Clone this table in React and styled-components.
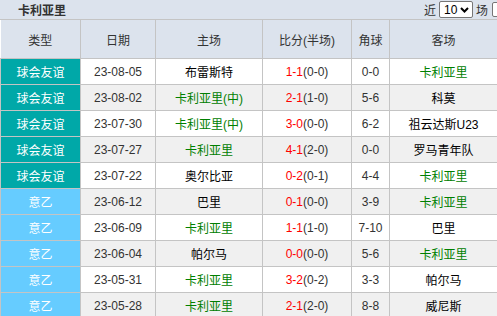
import React from "react";
import styled, { createGlobalStyle } from "styled-components";

const GlobalStyle = createGlobalStyle`
  html, body {
    margin: 0;
    padding: 0;
    background: #ffffff;
  }
  body {
    font-family: "Liberation Sans", "Noto Sans CJK SC", sans-serif;
    font-size: 12px;
    color: #333333;
  }
`;

const Wrapper = styled.div`
  width: 497px;
  height: 316px;
  overflow: hidden;
`;

const TitleBar = styled.div`
  height: 19px;
  background: #dce3ed;
  border-bottom: 1px solid #c4c4c4;
  display: flex;
  align-items: center;
  justify-content: space-between;
  padding-left: 18px;
`;

const Title = styled.div`
  font-size: 12px;
  font-weight: bold;
  color: #333333;
`;

const Recent = styled.div`
  display: flex;
  align-items: center;
  gap: 3px;
  color: #333333;
  margin-right: -9px;
`;

const FakeSelect = styled.div`
  width: 34px;
  height: 17px;
  border: 1px solid #767676;
  border-radius: 2px;
  background: #ffffff;
  display: flex;
  align-items: center;
  justify-content: space-between;
  padding: 0 3px 0 4px;
  box-sizing: border-box;
  font-size: 12px;
  color: #000000;
`;

const Check = styled.div`
  width: 12px;
  height: 13px;
  border: 1px solid #767676;
  border-radius: 2px;
  background: #ffffff;
  margin-left: 1px;
`;

const Table = styled.table`
  border-collapse: collapse;
  table-layout: fixed;
  width: 498px;
`;

const HeadCell = styled.th`
  height: 38px;
  padding: 0;
  background: #dce3ed;
  font-weight: normal;
  color: #333333;
  text-align: center;
  border: 1px solid #c4c4c4;
  border-top: none;
`;

const Row = styled.tr`
  background: ${(p) => (p.$alt ? "#f0f0f0" : "#ffffff")};
`;

const Cell = styled.td`
  height: 25px;
  padding: 0;
  text-align: center;
  border: 1px solid #c4c4c4;
  white-space: nowrap;
  color: #333333;
`;

const TypeCell = styled(Cell)`
  background: ${(p) => (p.$league ? "#66ccff" : "#00a8a8")};
  color: #ffffff;
`;

const TeamCell = styled(Cell)`
  color: ${(p) => (p.$green ? "#008000" : "#000000")};
`;

const Red = styled.span`
  color: #ff0000;
`;

const rows = [
  ["球会友谊", "23-08-05", "布雷斯特", false, "1-1", "(0-0)", "0-0", "卡利亚里", true],
  ["球会友谊", "23-08-02", "卡利亚里(中)", true, "2-1", "(1-0)", "5-6", "科莫", false],
  ["球会友谊", "23-07-30", "卡利亚里(中)", true, "3-0", "(0-0)", "6-2", "祖云达斯U23", false],
  ["球会友谊", "23-07-27", "卡利亚里", true, "4-1", "(2-0)", "0-0", "罗马青年队", false],
  ["球会友谊", "23-07-22", "奥尔比亚", false, "0-2", "(0-1)", "4-4", "卡利亚里", true],
  ["意乙", "23-06-12", "巴里", false, "0-1", "(0-0)", "3-9", "卡利亚里", true],
  ["意乙", "23-06-09", "卡利亚里", true, "1-1", "(1-0)", "7-10", "巴里", false],
  ["意乙", "23-06-04", "帕尔马", false, "0-0", "(0-0)", "5-6", "卡利亚里", true],
  ["意乙", "23-05-31", "卡利亚里", true, "3-2", "(0-2)", "3-3", "帕尔马", false],
  ["意乙", "23-05-28", "卡利亚里", true, "2-1", "(2-0)", "8-8", "威尼斯", false],
];

const Chevron = () => (
  <svg width="9" height="6" viewBox="0 0 9 6">
    <path d="M1 1 L4.5 4.5 L8 1" fill="none" stroke="#000" strokeWidth="2" />
  </svg>
);

export default function App() {
  return (
    <Wrapper>
      <GlobalStyle />
      <TitleBar>
        <Title>卡利亚里</Title>
        <Recent>
          <span>近</span>
          <FakeSelect>
            <span>10</span>
            <Chevron />
          </FakeSelect>
          <span>场</span>
          <Check />
        </Recent>
      </TitleBar>
      <Table>
        <colgroup>
          <col style={{ width: 80 }} />
          <col style={{ width: 75 }} />
          <col style={{ width: 107 }} />
          <col style={{ width: 89 }} />
          <col style={{ width: 38 }} />
          <col />
        </colgroup>
        <thead>
          <tr>
            <HeadCell style={{ borderLeft: "none" }}>类型</HeadCell>
            <HeadCell>日期</HeadCell>
            <HeadCell>主场</HeadCell>
            <HeadCell>比分(半场)</HeadCell>
            <HeadCell>角球</HeadCell>
            <HeadCell>客场</HeadCell>
          </tr>
        </thead>
        <tbody>
          {rows.map((r, i) => (
            <Row key={i} $alt={i % 2 === 1}>
              <TypeCell $league={r[0] === "意乙"}>{r[0]}</TypeCell>
              <Cell>{r[1]}</Cell>
              <TeamCell $green={r[3]}>{r[2]}</TeamCell>
              <Cell>
                <Red>{r[4]}</Red>
                {r[5]}
              </Cell>
              <Cell>{r[6]}</Cell>
              <TeamCell $green={r[8]}>{r[7]}</TeamCell>
            </Row>
          ))}
        </tbody>
      </Table>
    </Wrapper>
  );
}
